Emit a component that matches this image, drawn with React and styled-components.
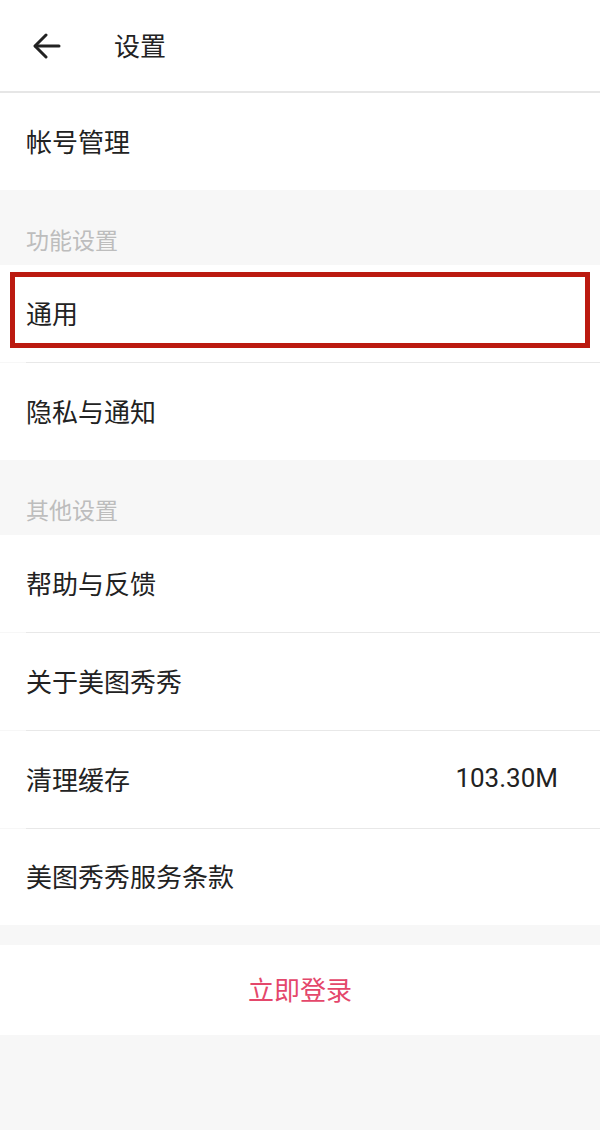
import React from 'react';
import styled, { createGlobalStyle } from 'styled-components';

const GlobalStyle = createGlobalStyle`
    body {
        margin: 0;
        background: #f7f7f7;
        font-family: "Noto Sans CJK SC", "Noto Sans", Roboto, sans-serif;
    }
`;

const Page = styled.div`
    width: 600px;
    min-height: 1130px;
    background: #f7f7f7;
    display: flex;
    flex-direction: column;
`;

const Header = styled.div`
    height: 91px;
    background: #fff;
    border-bottom: 2px solid #e6e6e6;
    display: flex;
    align-items: center;
    padding-left: 32px;
`;

const BackButton = styled.button`
    border: none;
    background: none;
    padding: 0;
    width: 30px;
    height: 30px;
    display: flex;
    align-items: center;
    justify-content: center;
    color: #222;
`;

const Title = styled.h1`
    margin: -2px 0 0 52px;
    font-size: 26px;
    font-weight: 400;
    color: #222;
`;

const Row = styled.div`
    position: relative;
    height: ${(p) => p.$height || 97}px;
    background: #fff;
    display: flex;
    align-items: center;
    justify-content: ${(p) => (p.$center ? 'center' : 'space-between')};
    padding: 0 42px 3px 26px;
    box-sizing: border-box;
    font-size: 26px;
    color: ${(p) => p.$color || '#222'};
    ${(p) => p.$center && 'padding: 0 0 3px 0;'}
`;

const Divider = styled.div`
    height: 1px;
    background: #e8e8e8;
    margin-left: 26px;
`;

const Value = styled.span`
    font-family: Roboto, "Liberation Sans", sans-serif;
    font-size: 26px;
    color: #222;
`;

const SectionTitle = styled.div`
    height: 75px;
    display: flex;
    align-items: flex-end;
    padding: 0 0 9px 26px;
    box-sizing: border-box;
    font-size: 23px;
    color: #bdbdbd;
`;

const Gap = styled.div`
    height: ${(p) => p.$height}px;
`;

const Highlight = styled.div`
    position: absolute;
    left: 10px;
    right: 10px;
    top: 7px;
    bottom: 14px;
    border: 5px solid #bb1a10;
    pointer-events: none;
`;

const ArrowIcon = () => (
    <svg width="28" height="26" viewBox="0 0 28 26" fill="none" stroke="currentColor" strokeWidth="3" strokeLinecap="round" strokeLinejoin="round">
        <path d="M13 2 2 13l11 11" />
        <path d="M2.5 13H26" />
    </svg>
);

export default function App() {
    return (
        <Page>
            <GlobalStyle />
            <Header>
                <BackButton><ArrowIcon /></BackButton>
                <Title>设置</Title>
            </Header>

            <Row>帐号管理</Row>

            <SectionTitle>功能设置</SectionTitle>
            <Row>
                通用
                <Highlight />
            </Row>
            <Divider />
            <Row>隐私与通知</Row>

            <SectionTitle>其他设置</SectionTitle>
            <Row>帮助与反馈</Row>
            <Divider />
            <Row>关于美图秀秀</Row>
            <Divider />
            <Row>
                清理缓存
                <Value>103.30M</Value>
            </Row>
            <Divider />
            <Row $height={96}>美图秀秀服务条款</Row>

            <Gap $height={20} />
            <Row $height={90} $center $color="#e4476b">立即登录</Row>
        </Page>
    );
}
